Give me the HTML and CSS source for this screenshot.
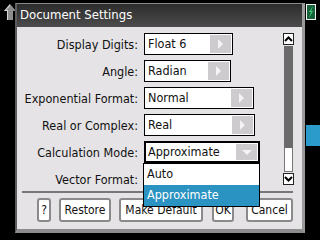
FILE: index.html
```html
<!DOCTYPE html>
<html>
<head>
<meta charset="utf-8">
<link rel="stylesheet" href="styles.css">
</head>
<body>
<div class="screen">
  <svg class="home" width="13" height="17" viewBox="0 0 13 17">
    <polygon points="7,0 13,7 10,7 10,16 4,16 4,7 1,7" fill="#8e8e8e"/>
    <polygon points="7,0 1,7 4,7 4,16 5,16 5,6 3,6 7,2" fill="#d4d4d4"/>
  </svg>
  <div class="dialog">
    <div class="title">Document Settings</div>
    <div class="body">
      <div class="content">
        <div class="form">
          <span class="label">Display Digits:</span>
          <div class="select w88"><span class="val">Float 6</span><span class="btn"><i class="tri-r"></i></span></div>
          <span class="label">Angle:</span>
          <div class="select w87"><span class="val">Radian</span><span class="btn"><i class="tri-r"></i></span></div>
          <span class="label">Exponential Format:</span>
          <div class="select w110"><span class="val">Normal</span><span class="btn"><i class="tri-r"></i></span></div>
          <span class="label">Real or Complex:</span>
          <div class="select w111"><span class="val">Real</span><span class="btn"><i class="tri-r"></i></span></div>
          <span class="label">Calculation Mode:</span>
          <div class="select focus w116"><span class="val">Approximate</span><span class="btn"><i class="tri-d"></i></span></div>
          <span class="label">Vector Format:</span>
          <div class="select w110"><span class="val"></span><span class="btn"><i class="tri-r"></i></span></div>
        </div>
        <div class="scrollbar">
          <div class="sb-btn"><svg width="9" height="6" viewBox="0 0 9 6"><polyline points="1,5 4.5,1.5 8,5" fill="none" stroke="#000" stroke-width="2"/></svg></div>
          <div class="thumb"></div>
          <div class="track"></div>
          <div class="sb-btn"><svg width="9" height="6" viewBox="0 0 9 6"><polyline points="1,1 4.5,4.5 8,1" fill="none" stroke="#000" stroke-width="2"/></svg></div>
        </div>
      </div>
      <div class="sep"></div>
      <div class="buttons">
        <span class="button b-help">?</span>
        <span class="button b-restore">Restore</span>
        <span class="button b-default">Make Default</span>
        <span class="button b-ok">OK</span>
        <span class="button b-cancel">Cancel</span>
      </div>
    </div>
    <div class="list">
      <div class="item">Auto</div>
      <div class="item sel">Approximate</div>
    </div>
  </div>
  <svg class="battery" width="10" height="16" viewBox="0 0 10 16">
    <rect x="0.5" y="0.5" width="9" height="15" fill="#17603a" stroke="#f2f2f2"/>
    <polygon points="7,2 3,8 5,8 3,14 7,7 5,7" fill="#3fd07a"/>
  </svg>
  <div class="tab"></div>
</div>
</body>
</html>
```
FILE: styles.css
```css
html, body {
  margin: 0;
  padding: 0;
  background: #000;
}
body {
  font-family: "DejaVu Sans Condensed", "DejaVu Sans", sans-serif;
  font-stretch: condensed;
  font-size: 12.5px;
  color: #111;
}
.screen {
  position: relative;
  width: 320px;
  height: 240px;
  overflow: hidden;
  padding-top: 3px;
  box-sizing: border-box;
}
.home {
  position: absolute;
  left: 3px;
  top: 4px;
}
.battery {
  position: absolute;
  left: 306px;
  top: 4px;
}
.tab {
  position: absolute;
  left: 306px;
  top: 125px;
  width: 14px;
  height: 21px;
  background: #2b9bcc;
}
.dialog {
  position: relative;
  margin-left: 15px;
  width: 290px;
  height: 230px;
  box-sizing: border-box;
  border-top: 1px solid #8a8a8a;
  border-left: 2px solid #5c5c5c;
  border-right: 3px solid #9a9a9a;
  border-bottom: 4px solid #8c8c8c;
  background: #e5e3e5;
  display: flex;
  flex-direction: column;
}
.title {
  height: 23px;
  line-height: 22px;
  padding-left: 3px;
  font-size: 13px;
  color: #fff;
  background: linear-gradient(#2c2c2c, #4c4c4c);
}
.body {
  flex: 1;
  display: flex;
  flex-direction: column;
}
.content {
  display: flex;
  height: 162px;
  padding-top: 6px;
  box-sizing: border-box;
  overflow: hidden;
}
.form {
  flex: 1;
  display: grid;
  grid-template-columns: 121px auto;
  column-gap: 6px;
  row-gap: 5px;
  align-content: start;
  justify-items: start;
  align-items: center;
}
.label {
  justify-self: end;
  white-space: nowrap;
}
.select {
  height: 22px;
  box-sizing: border-box;
  border: 1px solid #000;
  background: #fff;
  display: flex;
}
.select.focus {
  border-width: 2px;
}
.w88 { width: 89px; }
.w87 { width: 87px; }
.w110 { width: 110px; }
.w111 { width: 111px; }
.w116 { width: 116px; }
.val {
  flex: 1;
  padding-left: 3px;
  line-height: 20px;
}
.focus .val {
  padding-left: 2px;
  line-height: 18px;
}
.btn {
  width: 21px;
  margin: 1px;
  background: #cdcbcd;
  display: flex;
  align-items: center;
  justify-content: center;
}
.tri-r {
  width: 0;
  height: 0;
  border-top: 5px solid transparent;
  border-bottom: 5px solid transparent;
  border-left: 5px solid #f4f4f4;
}
.tri-d {
  width: 0;
  height: 0;
  border-left: 5px solid transparent;
  border-right: 5px solid transparent;
  border-top: 5px solid #f4f4f4;
}
.scrollbar {
  width: 11px;
  height: 152px;
  margin-right: 8px;
  display: flex;
  flex-direction: column;
}
.sb-btn {
  height: 12px;
  box-sizing: border-box;
  border: 1px solid #222;
  background: #fff;
  display: flex;
  align-items: center;
  justify-content: center;
}
.thumb {
  height: 102px;
  margin: 1px 1px 0;
  background: #6a6a6a;
}
.track {
  flex: 1;
  margin: 0 1px 1px;
  border: 1px solid #777;
  border-top: none;
  background: #fff;
}
.sep {
  height: 2px;
  margin: 2px 9px 0 5px;
  background: #777;
}
.buttons {
  display: flex;
  gap: 8px;
  padding-left: 20px;
  margin-top: 5px;
}
.button {
  flex: none;
  height: 24px;
  box-sizing: border-box;
  font-size: 12px;
  line-height: 20px;
  text-align: center;
  white-space: nowrap;
  border: 2px solid #8a8a8a;
  border-radius: 3px;
  background: #fff;
}
.b-help { width: 14px; }
.b-restore { width: 52px; }
.b-default { width: 84px; }
.b-ok { width: 22px; margin-left: 1px; }
.b-cancel { width: 47px; margin-left: 4px; }
.list {
  position: absolute;
  left: 126px;
  top: 159px;
  width: 117px;
  box-sizing: border-box;
  border: 1px solid #000;
  background: #fff;
}
.item {
  height: 21px;
  line-height: 20px;
  padding-left: 3px;
}
.item.sel {
  background: #2b93c2;
  color: #fff;
}
```
